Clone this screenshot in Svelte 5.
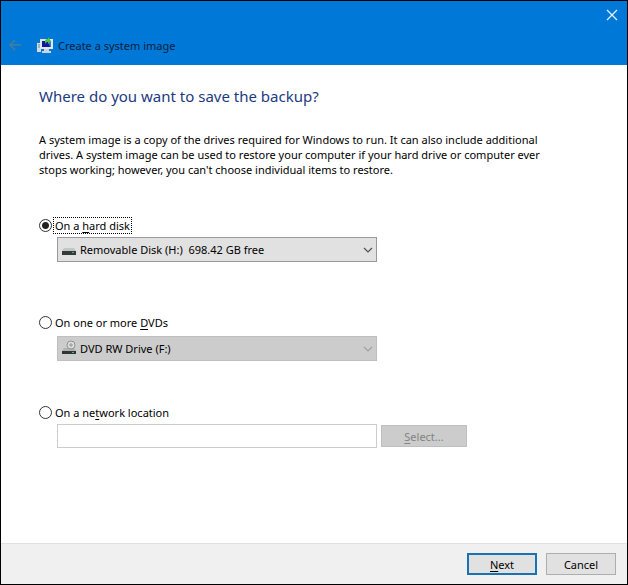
<script>
	let target = $state('disk');
	let drive = $state('H');
	let dvd = $state('F');
	let path = $state('');
</script>

<div class="window">
	<header>
		<button class="close" aria-label="Close">
			<svg width="12" height="12" viewBox="0 0 12 12"><path d="M1 1l10 10M11 1L1 11" fill="none" stroke="#e4f3ff" stroke-width="1.3" /></svg>
		</button>
		<div class="title">
			<button class="back" aria-label="Back" disabled>
				<svg width="12" height="12" viewBox="0 0 12 12"><path d="M12 6H1M6 1L1 6l5 5" fill="none" stroke="#4a7c96" stroke-width="1.5" /></svg>
			</button>
			<svg class="logo" width="16" height="16" viewBox="0 0 16 16">
				<path d="M0 6h4v9H0z" fill="#d5dce2" />
				<path d="M1 8h2M1 10h2" stroke="#71889c" />
				<path d="M3 2h13v10H3z" fill="#e3e7ea" />
				<path d="M5 4h9v6H5z" fill="#0b1d9c" />
				<path d="M11 4h3v6h-1z" fill="#3976df" />
				<path d="M7 12h5v2h2v2H5v-2h2z" fill="#cbd4dc" />
				<path d="M9 7c0-2 1-2 2-2v2l3-3-3-4v2C8 2 7 4 9 7z" fill="#4fc443" />
			</svg>
			<h1>Create a system image</h1>
		</div>
	</header>

	<main>
		<h2>Where do you want to save the backup?</h2>
		<p>
			A system image is a copy of the drives required for Windows to run. It can also include additional<br />
			drives. A system image can be used to restore your computer if your hard drive or computer ever<br />
			stops working; however, you can't choose individual items to restore.
		</p>

		<section class="disk">
			<label class="choice">
				<input type="radio" name="target" value="disk" bind:group={target} />
				<span class="focused">On a <u>h</u>ard disk</span>
			</label>
			<div class="combo">
				<svg class="drive" width="14" height="16" viewBox="0 0 14 16">
					<path d="M2 7h10l2 3H0z" fill="#c3c6c6" />
					<path d="M0 10h14v4H0z" fill="#353a3a" />
					<path d="M10 11h2v1h-2z" fill="#49b779" />
				</svg>
				<select bind:value={drive} aria-label="Hard disk">
					<option value="H">Removable Disk (H:)&nbsp; 698.42 GB free</option>
				</select>
				<svg class="arrow" width="10" height="6" viewBox="0 0 10 6"><path d="M1 1l4 4 4-4" fill="none" stroke="#505050" stroke-width="1.2" /></svg>
			</div>
		</section>

		<section class="dvd">
			<label class="choice">
				<input type="radio" name="target" value="dvd" bind:group={target} />
				<span>On one or more <u>D</u>VDs</span>
			</label>
			<div class="combo">
				<svg class="drive" width="14" height="16" viewBox="0 0 14 16">
					<path d="M2 8h10l2 3H0z" fill="#b0b2b2" />
					<circle cx="9" cy="5" r="4" fill="#dedede" stroke="#8e9292" />
					<circle cx="9" cy="5" r="1.3" fill="#bbb" stroke="#8e9292" stroke-width=".7" />
					<path d="M0 11h14v3H0z" fill="#303535" />
					<path d="M10 12h2v1h-2z" fill="#58b17d" />
				</svg>
				<select bind:value={dvd} aria-label="DVD drive" disabled={target !== 'dvd'}>
					<option value="F">DVD RW Drive (F:)</option>
				</select>
				<svg class="arrow" width="10" height="6" viewBox="0 0 10 6"><path d="M1 1l4 4 4-4" fill="none" stroke="#a0a0a0" stroke-width="1.2" /></svg>
			</div>
		</section>

		<section>
			<label class="choice">
				<input type="radio" name="target" value="network" bind:group={target} />
				<span>On a ne<u>t</u>work location</span>
			</label>
			<div class="network">
				<input type="text" bind:value={path} aria-label="Network location" disabled={target !== 'network'} />
				<button class="push" disabled={target !== 'network'}><u>S</u>elect...</button>
			</div>
		</section>
	</main>

	<footer>
		<button class="push default"><u>N</u>ext</button>
		<button class="push">Cancel</button>
	</footer>
</div>

<style>
	:global(body) {
		background: #fff;
	}
	.window,
	.window :is(button, input, select) {
		font-family: "Noto Sans", "Open Sans", sans-serif;
		font-size: 11px;
		color: #000;
	}
	.window {
		box-sizing: border-box;
		display: flex;
		flex-direction: column;
		min-height: 100vh;
		border: 1px solid #000;
		line-height: 15px;
	}
	button,
	input,
	select {
		box-sizing: border-box;
		margin: 0;
	}
	svg {
		display: block;
		flex: none;
	}
	u {
		text-underline-offset: 2px;
	}

	header {
		display: flex;
		flex-direction: column;
		height: 64px;
		background: #0078d7;
	}
	.window .close,
	.window .back {
		padding: 0;
		border: 0;
		background: none;
	}
	.window .close {
		align-self: flex-end;
		padding: 8px 9px;
	}
	.title {
		display: flex;
		align-items: center;
		margin-top: 8px;
		padding-left: 8px;
	}
	.logo {
		margin: 0 5px 0 16px;
	}
	h1 {
		margin: 0;
		font-size: 11px;
		font-weight: 400;
		color: #04213d;
	}

	main {
		flex: 1;
		padding: 20px 38px;
	}
	h2 {
		margin: 0;
		font-size: 15px;
		font-weight: 400;
		line-height: 22px;
		color: #1c3a80;
	}
	p {
		margin: 25px 0 41px;
		white-space: nowrap;
	}

	.choice {
		display: flex;
		align-items: center;
		width: max-content;
		gap: 2px;
	}
	.choice span {
		padding: 0 1px;
	}
	.choice .focused {
		outline: 1px dotted #000;
	}
	input[type='radio'] {
		appearance: none;
		width: 13px;
		height: 13px;
		border: 1px solid #333;
		border-radius: 50%;
		background: #fff;
	}
	input[type='radio']:checked {
		background: radial-gradient(circle, #222 3px, #fff 4px);
	}
	.disk {
		margin-bottom: 53px;
	}
	.dvd {
		margin-bottom: 44px;
	}

	.combo,
	.network {
		display: flex;
		margin: 4px 0 0 18px;
	}
	.combo {
		position: relative;
		max-width: 320px;
	}
	.dvd .combo {
		margin-top: 6px;
	}
	select {
		appearance: none;
		width: 100%;
		height: 25px;
		padding: 0 24px 0 22px;
		border: 1px solid #999;
		border-radius: 0;
		background: #e1e1e1;
	}
	select:disabled {
		border-color: #bfbfbf;
		background: #ccc;
		opacity: 1;
	}
	.drive,
	.arrow {
		position: absolute;
		pointer-events: none;
	}
	.drive {
		top: 4px;
		left: 5px;
	}
	.arrow {
		top: 10px;
		right: 4px;
	}

	.network {
		align-items: center;
		gap: 4px;
	}
	input[type='text'] {
		width: 320px;
		height: 24px;
		padding: 0 4px;
		border: 1px solid #ccc;
		background: #fff;
	}
	.push {
		width: 70px;
		height: 22px;
		padding: 0;
		border: 1px solid #adadad;
		background: #e1e1e1;
	}
	.network .push {
		width: 86px;
	}
	.window .push:disabled {
		border-color: #bfbfbf;
		background: #ccc;
		color: #838383;
	}
	.push.default {
		border: 2px solid #1a72b5;
	}

	footer {
		display: flex;
		justify-content: flex-end;
		gap: 9px;
		padding: 9px 11px;
		border-top: 1px solid #dfdfdf;
		background: #f0f0f0;
	}
</style>
